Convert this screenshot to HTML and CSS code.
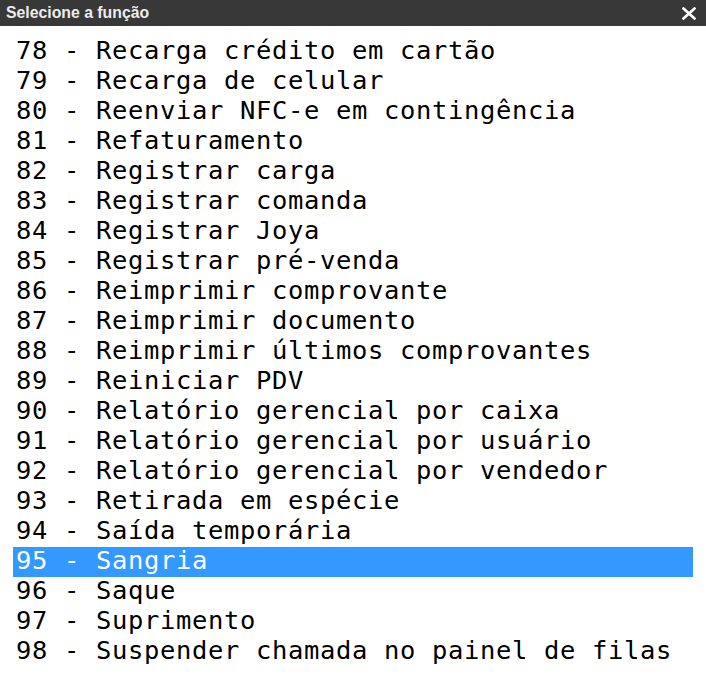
FILE: index.html
```html
<!DOCTYPE html>
<html lang="pt-BR">
<head>
<meta charset="utf-8">
<title>Selecione a função</title>
<link rel="stylesheet" href="styles.css">
</head>
<body>
<div class="dialog">
  <div class="titlebar">
    <span class="title">Selecione a função</span>
    <svg class="close" width="14" height="13" viewBox="0 0 14 13" aria-hidden="true">
      <path d="M1.5 1.5 L12.5 11.5 M12.5 1.5 L1.5 11.5" stroke="#ffffff" stroke-width="2.6" stroke-linecap="square" fill="none"/>
    </svg>
  </div>
  <ul class="list">
    <li class="item">78 - Recarga crédito em cartão</li>
    <li class="item">79 - Recarga de celular</li>
    <li class="item">80 - Reenviar NFC-e em contingência</li>
    <li class="item">81 - Refaturamento</li>
    <li class="item">82 - Registrar carga</li>
    <li class="item">83 - Registrar comanda</li>
    <li class="item">84 - Registrar Joya</li>
    <li class="item">85 - Registrar pré-venda</li>
    <li class="item">86 - Reimprimir comprovante</li>
    <li class="item">87 - Reimprimir documento</li>
    <li class="item">88 - Reimprimir últimos comprovantes</li>
    <li class="item">89 - Reiniciar PDV</li>
    <li class="item">90 - Relatório gerencial por caixa</li>
    <li class="item">91 - Relatório gerencial por usuário</li>
    <li class="item">92 - Relatório gerencial por vendedor</li>
    <li class="item">93 - Retirada em espécie</li>
    <li class="item">94 - Saída temporária</li>
    <li class="item selected">95 - Sangria</li>
    <li class="item">96 - Saque</li>
    <li class="item">97 - Suprimento</li>
    <li class="item">98 - Suspender chamada no painel de filas</li>
  </ul>
</div>
</body>
</html>
```

FILE: styles.css
```css
html, body {
  margin: 0;
  padding: 0;
  background: #ffffff;
}

.dialog {
  width: 706px;
  height: 676px;
  overflow: hidden;
  background: #ffffff;
}

.titlebar {
  height: 26px;
  background: #383838;
  display: flex;
  align-items: center;
  justify-content: space-between;
  padding: 0 10px 0 6px;
}

.title {
  font-family: "Liberation Sans", Arial, sans-serif;
  font-weight: bold;
  font-size: 15.8px;
  color: #ececec;
  line-height: 26px;
}

.close {
  display: block;
  margin-top: 1px;
}

.list {
  list-style: none;
  margin: 11px 13px 0 13px;
  padding: 0;
}

.item {
  box-sizing: border-box;
  height: 30px;
  line-height: 26px;
  padding-left: 3px;
  font-family: "DejaVu Sans Mono", "Liberation Mono", monospace;
  font-size: 25.5px;
  letter-spacing: 0.65px;
  color: #000000;
  white-space: pre;
}

.item.selected {
  background: #3399ff;
  color: #ffffff;
}
```
